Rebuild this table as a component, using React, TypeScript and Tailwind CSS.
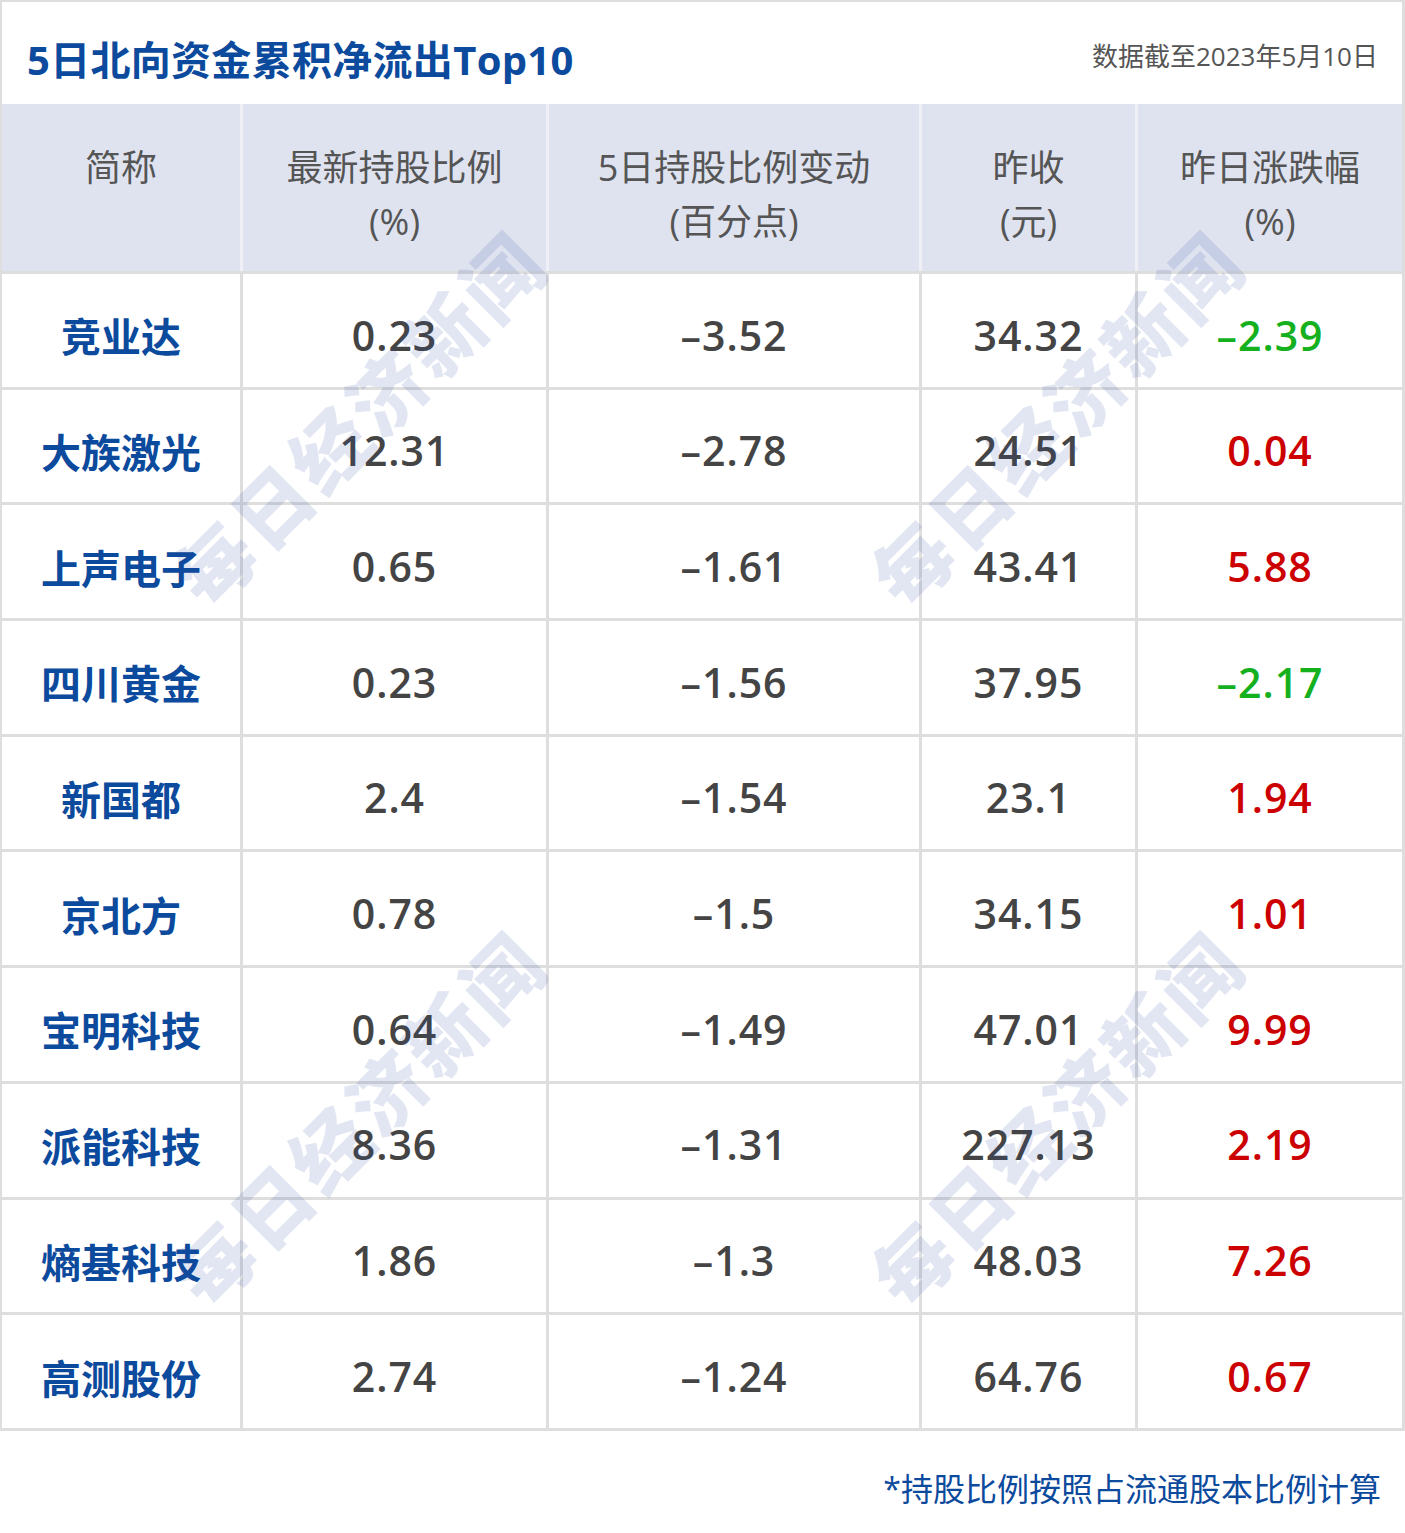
const cols = "grid grid-cols-[238px_303px_370px_213px_264px]";

const headers: string[][] = [
  ["简称"],
  ["最新持股比例", "(%)"],
  ["5日持股比例变动", "(百分点)"],
  ["昨收", "(元)"],
  ["昨日涨跌幅", "(%)"],
];

// name, latest ratio, 5-day change, last close, last change
const rows: [string, string, string, string, string][] = [
  ["竞业达", "0.23", "–3.52", "34.32", "–2.39"],
  ["大族激光", "12.31", "–2.78", "24.51", "0.04"],
  ["上声电子", "0.65", "–1.61", "43.41", "5.88"],
  ["四川黄金", "0.23", "–1.56", "37.95", "–2.17"],
  ["新国都", "2.4", "–1.54", "23.1", "1.94"],
  ["京北方", "0.78", "–1.5", "34.15", "1.01"],
  ["宝明科技", "0.64", "–1.49", "47.01", "9.99"],
  ["派能科技", "8.36", "–1.31", "227.13", "2.19"],
  ["熵基科技", "1.86", "–1.3", "48.03", "7.26"],
  ["高测股份", "2.74", "–1.24", "64.76", "0.67"],
];

const cjk = "font-['Open_Sans','Noto_Sans_CJK_SC',sans-serif]";

function Watermark({ x, y }: { x: number; y: number }) {
  return (
    <div
      className="pointer-events-none absolute whitespace-nowrap -translate-x-1/2 -translate-y-1/2 -rotate-45 text-[77px] leading-none font-black tracking-[4px] text-[rgba(40,80,160,0.14)] font-['Noto_Sans_CJK_SC',sans-serif]"
      style={{ left: x, top: y }}
    >
      每日经济新闻
    </div>
  );
}

export default function App() {
  return (
    <div className={`relative w-[1405px] h-[1533px] bg-white ${cjk}`}>
      <div className="bg-[#dedede] pt-[2px] pl-[2px] pr-[3px] pb-[3px]">
        {/* title bar */}
        <div className="bg-white h-[102px] flex items-center justify-between pl-[25px] pr-[24px] pt-[14px]">
          <h1 className="text-[40px] font-bold text-[#0b4a9c] tracking-[0.3px]">
            5日北向资金累积净流出Top10
          </h1>
          <span className="text-[26px] text-[#555] pb-[8px]">数据截至2023年5月10日</span>
        </div>

        {/* header */}
        <div className={`${cols} gap-x-[3px] bg-[#eef0f6]`}>
          {headers.map((h) => (
            <div
              key={h[0]}
              className="bg-[#dfe3f0] h-[167px] pt-[37px] flex flex-col items-center text-[36px] leading-[54px] text-[#555]"
            >
              {h.map((line) => (
                <span key={line}>{line}</span>
              ))}
            </div>
          ))}
        </div>

        {/* body */}
        <div className={`${cols} gap-[3px] pt-[3px]`}>
          {rows.map((r) =>
            r.map((v, i) => {
              let color = "text-[#444]";
              if (i === 4) color = v.startsWith("–") ? "text-[#14b01e]" : "text-[#cc0000]";
              return (
                <div
                  key={r[0] + i}
                  className="bg-white h-[112.7px] flex items-center justify-center pt-[10px]"
                >
                  {i === 0 ? (
                    <span className="text-[40px] font-bold text-[#0b4a9c] font-['Noto_Sans_CJK_SC',sans-serif]">
                      {v}
                    </span>
                  ) : (
                    <span className={`text-[41px] font-semibold tracking-[1px] ${color} font-['Open_Sans',sans-serif]`}>
                      {v}
                    </span>
                  )}
                </div>
              );
            })
          )}
        </div>
      </div>

      <div className="flex justify-end pr-[24px] pt-[34px]">
        <span className="text-[32px] text-[#0b4a9c]">*持股比例按照占流通股本比例计算</span>
      </div>

      <Watermark x={357} y={417} />
      <Watermark x={1055} y={417} />
      <Watermark x={357} y={1117} />
      <Watermark x={1055} y={1117} />
    </div>
  );
}
